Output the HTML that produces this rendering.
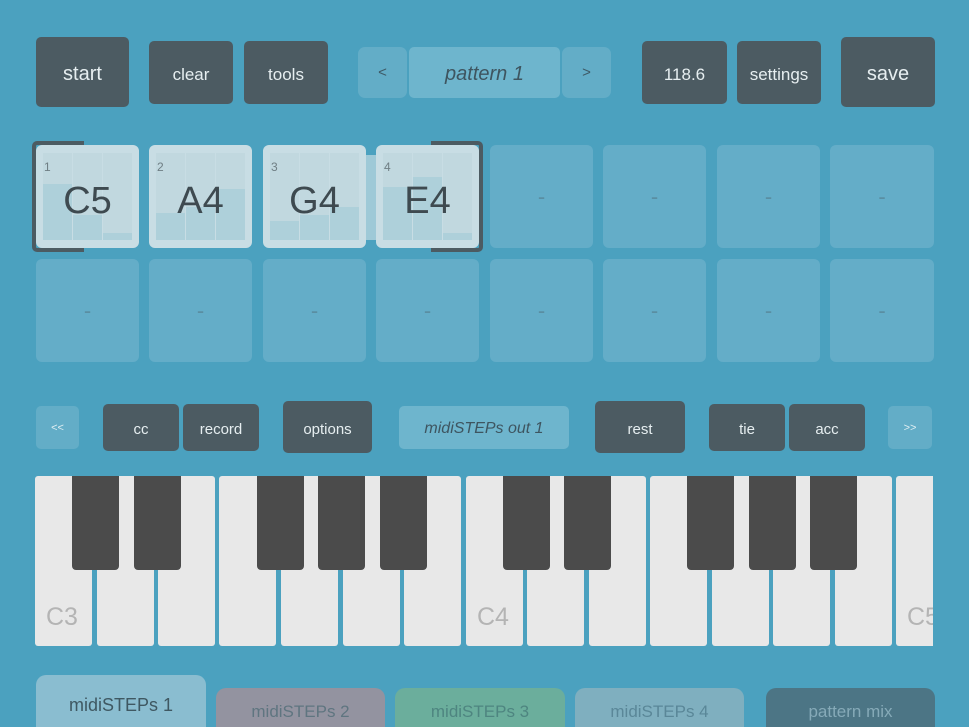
<!DOCTYPE html>
<html><head><style>
body{margin:0;width:969px;height:727px;overflow:hidden;background:#4ba1bf;font-family:"Liberation Sans",sans-serif;position:relative}
.a{position:absolute;box-sizing:border-box;display:flex;align-items:center;justify-content:center;border-radius:5px}
.d{background:#4c5b62;color:#e6eef0;font-size:17px;padding-top:4px}
.l{background:#63adc7;color:#3e5a66;font-size:15px}
.e{background:#64adc8;color:#5a8ea2;font-size:22px;border-radius:6px}
.s{background:#c8dde4;border-radius:6px;overflow:hidden}
.s .c{position:absolute;top:8px;bottom:8px;background:#c1d8df}
.s .b{position:absolute;bottom:8px;background:#aed0da}
.s .n{position:absolute;left:8px;top:15px;font-size:12px;color:#6f7e84}
.s .t{position:absolute;left:0;right:0;top:35px;text-align:center;font-size:38px;color:#3e4a50}
.w{position:absolute;top:476px;height:170px;width:57px;background:#e8e8e8;border-radius:3px}
.k{position:absolute;top:476px;height:94px;width:47px;background:#4b4b4b;border-radius:0 0 4px 4px}
.lab{position:absolute;top:603px;font-size:25px;color:#b4b4b4}
.tab{position:absolute;border-radius:10px 10px 0 0;display:flex;justify-content:center;padding-top:14px;box-sizing:border-box;font-size:17px}
</style></head><body>
<div class="a d" style="left:36px;top:37px;width:93px;height:70px;font-size:20px">start</div>
<div class="a d" style="left:149px;top:41px;width:84px;height:63px">clear</div>
<div class="a d" style="left:244px;top:41px;width:84px;height:63px">tools</div>
<div class="a l" style="left:358px;top:47px;width:49px;height:51px;border-radius:7px">&lt;</div>
<div class="a" style="left:409px;top:47px;width:151px;height:51px;background:#6eb5cd;color:#3e5560;font-size:20px;font-style:italic;padding-top:3px">pattern 1</div>
<div class="a l" style="left:562px;top:47px;width:49px;height:51px;border-radius:7px">&gt;</div>
<div class="a d" style="left:642px;top:41px;width:85px;height:63px">118.6</div>
<div class="a d" style="left:737px;top:41px;width:84px;height:63px">settings</div>
<div class="a d" style="left:841px;top:37px;width:94px;height:70px;font-size:20px">save</div>

<div class="a" style="left:32px;top:141px;width:52px;height:111px;border:4px solid #4c5b62;border-right:none;border-radius:5px 0 0 5px"></div>
<div class="a" style="left:431px;top:141px;width:52px;height:111px;border:4px solid #4c5b62;border-left:none;border-radius:0 5px 5px 0"></div>
<div style="position:absolute;left:360px;top:155px;width:30px;height:85px;background:#9ec9d7"></div>

<div class="a s" style="left:36px;top:145px;width:103px;height:103px"><div class="c" style="left:7px;width:29px"></div><div class="c" style="left:37px;width:29px"></div><div class="c" style="left:67px;width:29px"></div><div class="b" style="left:7px;width:29px;top:39px"></div><div class="b" style="left:37px;width:29px;top:70px"></div><div class="b" style="left:67px;width:29px;top:88px"></div><div class="n">1</div><div class="t">C5</div></div>
<div class="a s" style="left:149px;top:145px;width:103px;height:103px"><div class="c" style="left:7px;width:29px"></div><div class="c" style="left:37px;width:29px"></div><div class="c" style="left:67px;width:29px"></div><div class="b" style="left:7px;width:29px;top:68px"></div><div class="b" style="left:37px;width:29px;top:62px"></div><div class="b" style="left:67px;width:29px;top:44px"></div><div class="n">2</div><div class="t">A4</div></div>
<div class="a s" style="left:263px;top:145px;width:103px;height:103px"><div class="c" style="left:7px;width:29px"></div><div class="c" style="left:37px;width:29px"></div><div class="c" style="left:67px;width:29px"></div><div class="b" style="left:7px;width:29px;top:76px"></div><div class="b" style="left:37px;width:29px;top:70px"></div><div class="b" style="left:67px;width:29px;top:62px"></div><div class="n">3</div><div class="t">G4</div></div>
<div class="a s" style="left:376px;top:145px;width:103px;height:103px"><div class="c" style="left:7px;width:29px"></div><div class="c" style="left:37px;width:29px"></div><div class="c" style="left:67px;width:29px"></div><div class="b" style="left:7px;width:29px;top:42px"></div><div class="b" style="left:37px;width:29px;top:32px"></div><div class="b" style="left:67px;width:29px;top:88px"></div><div class="n">4</div><div class="t">E4</div></div>
<div class="a e" style="left:490px;top:145px;width:103px;height:103px">-</div>
<div class="a e" style="left:603px;top:145px;width:103px;height:103px">-</div>
<div class="a e" style="left:717px;top:145px;width:103px;height:103px">-</div>
<div class="a e" style="left:830px;top:145px;width:104px;height:103px">-</div>
<div class="a e" style="left:36px;top:259px;width:103px;height:103px">-</div>
<div class="a e" style="left:149px;top:259px;width:103px;height:103px">-</div>
<div class="a e" style="left:263px;top:259px;width:103px;height:103px">-</div>
<div class="a e" style="left:376px;top:259px;width:103px;height:103px">-</div>
<div class="a e" style="left:490px;top:259px;width:103px;height:103px">-</div>
<div class="a e" style="left:603px;top:259px;width:103px;height:103px">-</div>
<div class="a e" style="left:717px;top:259px;width:103px;height:103px">-</div>
<div class="a e" style="left:830px;top:259px;width:104px;height:103px">-</div>

<div class="a l" style="left:36px;top:406px;width:43px;height:43px;font-size:11px;color:#e0eef2">&lt;&lt;</div>
<div class="a d" style="left:103px;top:404px;width:76px;height:47px;font-size:15px">cc</div>
<div class="a d" style="left:183px;top:404px;width:76px;height:47px;font-size:15px">record</div>
<div class="a d" style="left:283px;top:401px;width:89px;height:52px;font-size:15px">options</div>
<div class="a" style="left:399px;top:406px;width:170px;height:43px;background:#6eb5cd;color:#3e5560;font-size:16px;font-style:italic;padding-top:3px">midiSTEPs out 1</div>
<div class="a d" style="left:595px;top:401px;width:90px;height:52px;font-size:15px">rest</div>
<div class="a d" style="left:709px;top:404px;width:76px;height:47px;font-size:15px">tie</div>
<div class="a d" style="left:789px;top:404px;width:76px;height:47px;font-size:15px">acc</div>
<div class="a l" style="left:888px;top:406px;width:44px;height:43px;font-size:11px;color:#e0eef2">&gt;&gt;</div>

<div class="w" style="left:35px"></div><div class="w" style="left:97px"></div><div class="w" style="left:158px"></div><div class="w" style="left:219px"></div><div class="w" style="left:281px"></div><div class="w" style="left:343px"></div><div class="w" style="left:404px"></div><div class="w" style="left:466px"></div><div class="w" style="left:527px"></div><div class="w" style="left:589px"></div><div class="w" style="left:650px"></div><div class="w" style="left:712px"></div><div class="w" style="left:773px"></div><div class="w" style="left:835px"></div><div class="w" style="left:896px;width:37px;border-radius:3px 0 0 3px"></div>
<div class="k" style="left:72px"></div><div class="k" style="left:134px"></div><div class="k" style="left:257px"></div><div class="k" style="left:318px"></div><div class="k" style="left:380px"></div><div class="k" style="left:503px"></div><div class="k" style="left:564px"></div><div class="k" style="left:687px"></div><div class="k" style="left:749px"></div><div class="k" style="left:810px"></div>
<div class="lab" style="left:46px">C3</div><div class="lab" style="left:477px">C4</div><div class="lab" style="left:907px;width:26px;overflow:hidden">C5</div>

<div class="tab" style="left:36px;top:675px;width:170px;height:52px;background:#8abdd0;color:#3f5862;padding-top:20px;font-size:18px">midiSTEPs 1</div>
<div class="tab" style="left:216px;top:688px;width:169px;height:39px;background:#9393a0;color:#5f7580">midiSTEPs 2</div>
<div class="tab" style="left:395px;top:688px;width:170px;height:39px;background:#6bae9c;color:#4e8580">midiSTEPs 3</div>
<div class="tab" style="left:575px;top:688px;width:169px;height:39px;background:#7fafbf;color:#5a8798">midiSTEPs 4</div>
<div class="tab" style="left:766px;top:688px;width:169px;height:39px;background:#4c7585;color:#86aab8">pattern mix</div>
</body></html>
